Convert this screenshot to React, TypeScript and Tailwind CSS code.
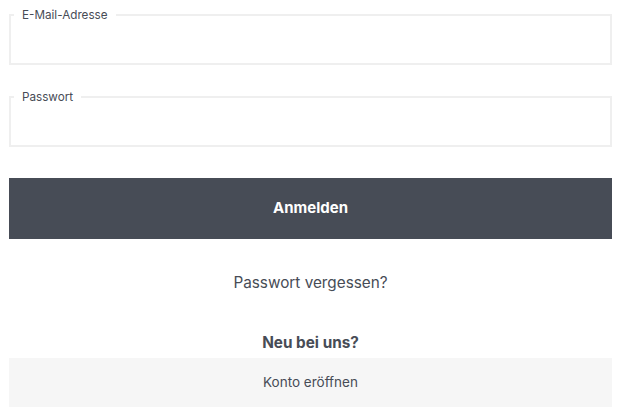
export default function App() {
  return (
    <div className="min-h-screen bg-white px-[9px] pt-[9px] text-[#474c56]" style={{ fontFamily: 'Inter, "Noto Sans", sans-serif' }}>
      <form className="flex flex-col" onSubmit={e => e.preventDefault()}>
        {/* E-Mail */}
        <fieldset className="border-2 border-[#efefef] pl-[3px] pr-3 h-[56px]">
          <legend className="px-2 text-[11.7px] leading-[12px] text-[#474c56]">E-Mail-Adresse</legend>
          <input type="email" className="w-full h-[36px] outline-none bg-transparent text-sm px-2" />
        </fieldset>

        {/* Passwort */}
        <fieldset className="border-2 border-[#efefef] pl-[3px] pr-3 h-[56px] mt-[26px]">
          <legend className="px-2 text-[11.7px] leading-[12px] text-[#474c56]">Passwort</legend>
          <input type="password" className="w-full h-[36px] outline-none bg-transparent text-sm px-2" />
        </fieldset>

        <button type="submit" className="mt-[31px] h-[61px] w-full bg-[#474c56] text-white text-[15px] font-bold">
          Anmelden
        </button>
      </form>

      <div className="mt-[32px] text-center text-[15.3px] leading-[24px]">Passwort vergessen?</div>

      <div className="mt-[37px] text-center text-[15.3px] leading-[22px] font-bold">Neu bei uns?</div>
      <button className="mt-[4px] h-[49px] w-full bg-[#f6f6f6] text-[13.5px] text-[#474c56]">
        Konto eröffnen
      </button>
    </div>
  )
}
